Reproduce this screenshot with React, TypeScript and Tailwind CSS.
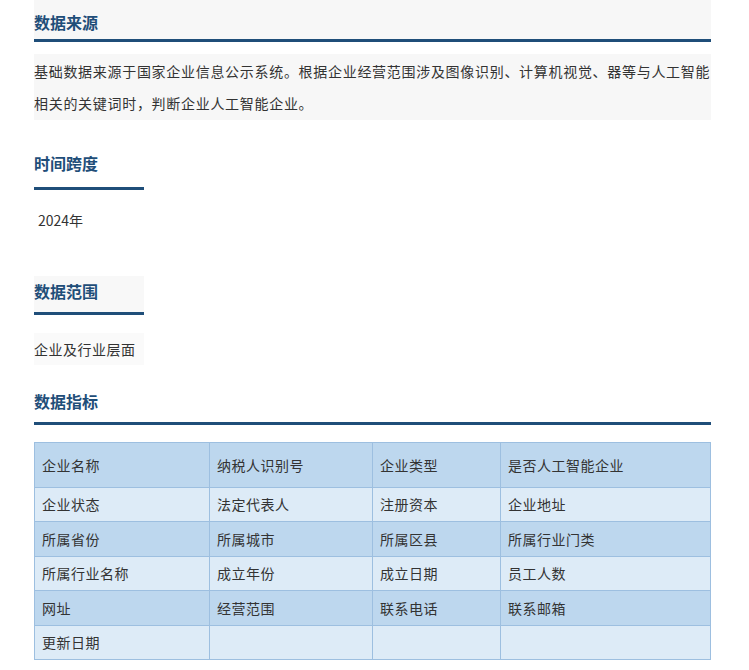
export default function App() {
  const rows = [
    ["企业名称", "纳税人识别号", "企业类型", "是否人工智能企业"],
    ["企业状态", "法定代表人", "注册资本", "企业地址"],
    ["所属省份", "所属城市", "所属区县", "所属行业门类"],
    ["所属行业名称", "成立年份", "成立日期", "员工人数"],
    ["网址", "经营范围", "联系电话", "联系邮箱"],
    ["更新日期", "", "", ""],
  ];
  const font = { fontFamily: '"Noto Sans CJK SC", "Noto Sans", sans-serif' };
  return (
    <div className="w-[749px] h-[670px] bg-white text-[#333] overflow-hidden" style={font}>
      <div className="ml-[34px] w-[677px]">
        <div className="bg-[#f7f7f7] pt-[4px]">
          <div className="h-[35px] flex items-center text-[16px] font-bold text-[#1f4e79]">数据来源</div>
          <div className="h-[3px] bg-[#1f4e79]" />
          <div className="h-[4px] bg-white" />
        </div>
        <div className="h-[8px]" />
        <div className="bg-[#f7f7f7] text-[14px] tracking-[0.7px] leading-[32px] py-[1px]">
          基础数据来源于国家企业信息公示系统。根据企业经营范围涉及图像识别、计算机视觉、器等与人工智能相关的关键词时，判断企业人工智能企业。
        </div>
        <div className="h-[28px]" />
        <div className="h-[30px] flex items-center text-[16px] font-bold text-[#1f4e79]">时间跨度</div>
        <div className="h-[3px] w-[110px] bg-[#1f4e79] mt-[9px]" />
        <div className="mt-[19px] ml-[4px] text-[14px] leading-[22px]">2024年</div>
        <div className="h-[45px]" />
        <div className="w-[110px] bg-[#f8f8f8]">
          <div className="h-[30px] flex items-end text-[16px] font-bold text-[#1f4e79] pb-[3px]">数据范围</div>
          <div className="h-[3px] bg-[#1f4e79] mt-[6px]" />
          <div className="h-[6px] bg-white" />
        </div>
        <div className="w-[110px] h-[32px] mt-[12px] bg-[#fafafa] flex items-center text-[14px] tracking-[0.5px]">企业及行业层面</div>
        <div className="h-[21px]" />
        <div className="h-[30px] flex items-center text-[16px] font-bold text-[#1f4e79]">数据指标</div>
        <div className="h-[3px] bg-[#1f4e79] mt-[6px]" />
        <div className="h-[17px]" />
        <table className="w-[677px] border-collapse text-[14px] tracking-[0.5px] border border-[#8eaed0]">
          <tbody>
            {rows.map((r, i) => (
              <tr key={i} className={i === 0 ? "h-[45px] bg-[#bdd7ee]" : i % 2 === 1 ? "h-[34px] bg-[#ddebf7]" : "h-[35px] bg-[#bdd7ee]"}>
                {r.map((c, j) => (
                  <td key={j} className={"border border-[#9dbfe0] px-[7px] " + (j === 0 ? "w-[175px]" : j === 1 ? "w-[163px]" : j === 2 ? "w-[128px]" : "")}>{c}</td>
                ))}
              </tr>
            ))}
          </tbody>
        </table>
      </div>
    </div>
  );
}
